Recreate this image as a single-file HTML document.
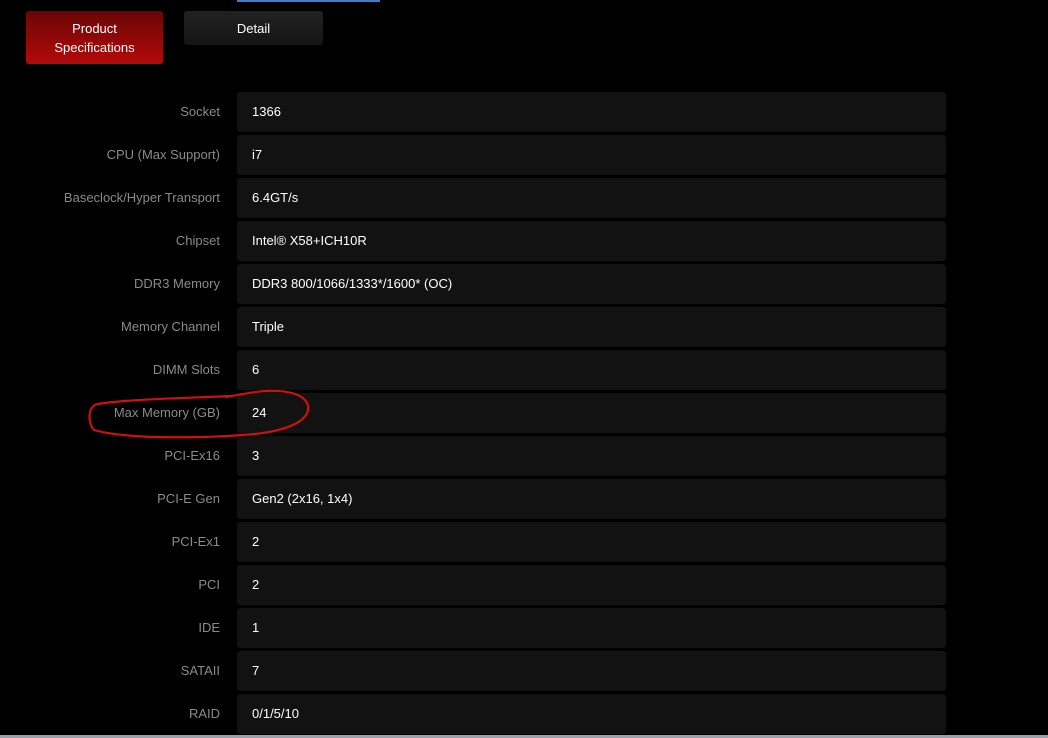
<!DOCTYPE html>
<html><head><style>
body{margin:0;width:1048px;height:738px;background:#000;position:relative;overflow:hidden;font-family:"Liberation Sans",Arial,sans-serif;}
.btn{position:absolute;border-radius:3px;color:#fff;font-size:13px;text-align:center;display:flex;align-items:center;justify-content:center;line-height:19px}
.red{left:26px;top:11px;width:137px;height:53px;background:linear-gradient(#6a0606,#b30a0a);}
.dark{left:184px;top:11px;width:139px;height:34px;background:linear-gradient(#222,#151515);}
.row{position:absolute;left:0;width:1048px;height:40px}
.lab{position:absolute;right:828px;top:0;line-height:40px;color:#8a8a8a;font-size:13px;white-space:nowrap}
.val{position:absolute;left:237px;width:709px;top:0;height:40px;background:#121212;border-radius:3px;color:#fff;font-size:13px;line-height:40px;box-sizing:border-box;padding-left:15px}
</style></head><body>
<div style="position:absolute;left:237px;top:0;width:143px;height:2px;background:#3a7fd0"></div>
<div class="btn red">Product<br>Specifications</div>
<div class="btn dark">Detail</div>
<div class="row" style="top:92px"><span class="lab">Socket</span><div class="val">1366</div></div>
<div class="row" style="top:135px"><span class="lab">CPU (Max Support)</span><div class="val">i7</div></div>
<div class="row" style="top:178px"><span class="lab">Baseclock/Hyper Transport</span><div class="val">6.4GT/s</div></div>
<div class="row" style="top:221px"><span class="lab">Chipset</span><div class="val">Intel® X58+ICH10R</div></div>
<div class="row" style="top:264px"><span class="lab">DDR3 Memory</span><div class="val">DDR3 800/1066/1333*/1600* (OC)</div></div>
<div class="row" style="top:307px"><span class="lab">Memory Channel</span><div class="val">Triple</div></div>
<div class="row" style="top:350px"><span class="lab">DIMM Slots</span><div class="val">6</div></div>
<div class="row" style="top:393px"><span class="lab">Max Memory (GB)</span><div class="val">24</div></div>
<div class="row" style="top:436px"><span class="lab">PCI-Ex16</span><div class="val">3</div></div>
<div class="row" style="top:479px"><span class="lab">PCI-E Gen</span><div class="val">Gen2 (2x16, 1x4)</div></div>
<div class="row" style="top:522px"><span class="lab">PCI-Ex1</span><div class="val">2</div></div>
<div class="row" style="top:565px"><span class="lab">PCI</span><div class="val">2</div></div>
<div class="row" style="top:608px"><span class="lab">IDE</span><div class="val">1</div></div>
<div class="row" style="top:651px"><span class="lab">SATAII</span><div class="val">7</div></div>
<div class="row" style="top:694px"><span class="lab">RAID</span><div class="val">0/1/5/10</div></div>
<svg style="position:absolute;left:0;top:0" width="1048" height="738">
<path d="M230,396 C190,398 130,399 97,404 C87,407 88,424 94,430 C130,440 210,438 255,434 C290,430 310,420 308,406 C305,393 285,390 265,391 C250,392 240,395 225,397" fill="none" stroke="#d01010" stroke-width="2.2"/>
</svg>
<div style="position:absolute;left:0;top:735px;width:1048px;height:3px;background:#9aa0a8"></div>
</body></html>
